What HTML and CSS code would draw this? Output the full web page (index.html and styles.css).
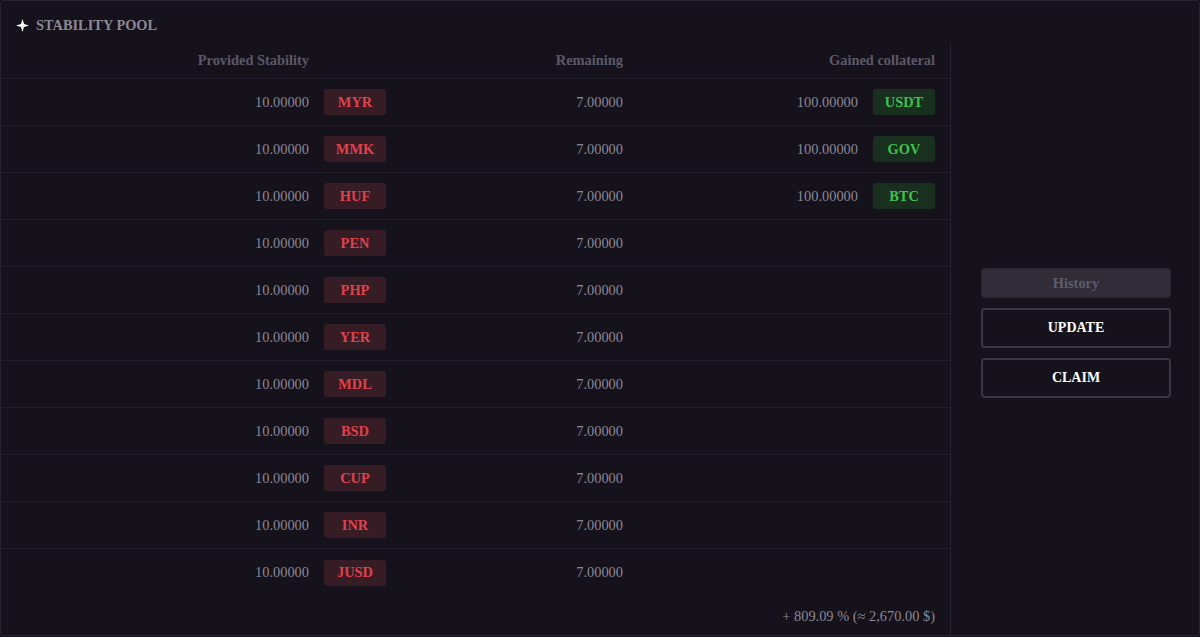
FILE: index.html
```html
<!DOCTYPE html>
<html>
<head>
<meta charset="utf-8">
<link rel="stylesheet" href="styles.css">
</head>
<body>
<div class="card">
  <div class="title">
    <svg class="star" width="13" height="13" viewBox="0 0 13 13"><path d="M6.5 0 L8 5 L13 6.5 L8 8 L6.5 13 L5 8 L0 6.5 L5 5 Z" fill="#ffffff"/></svg>
    <span>STABILITY POOL</span>
  </div>
  <div class="body">
    <div class="table">
      <div class="row head">
        <div class="num">Provided Stability</div>
        <div></div>
        <div class="num">Remaining</div>
        <div class="num">Gained collateral</div>
      </div>
      <div class="row"><div class="num">10.00000</div><div><span class="badge red">MYR</span></div><div class="num">7.00000</div><div class="gain"><span>100.00000</span><span class="badge green">USDT</span></div></div>
      <div class="row"><div class="num">10.00000</div><div><span class="badge red">MMK</span></div><div class="num">7.00000</div><div class="gain"><span>100.00000</span><span class="badge green">GOV</span></div></div>
      <div class="row"><div class="num">10.00000</div><div><span class="badge red">HUF</span></div><div class="num">7.00000</div><div class="gain"><span>100.00000</span><span class="badge green">BTC</span></div></div>
      <div class="row"><div class="num">10.00000</div><div><span class="badge red">PEN</span></div><div class="num">7.00000</div><div></div></div>
      <div class="row"><div class="num">10.00000</div><div><span class="badge red">PHP</span></div><div class="num">7.00000</div><div></div></div>
      <div class="row"><div class="num">10.00000</div><div><span class="badge red">YER</span></div><div class="num">7.00000</div><div></div></div>
      <div class="row"><div class="num">10.00000</div><div><span class="badge red">MDL</span></div><div class="num">7.00000</div><div></div></div>
      <div class="row"><div class="num">10.00000</div><div><span class="badge red">BSD</span></div><div class="num">7.00000</div><div></div></div>
      <div class="row"><div class="num">10.00000</div><div><span class="badge red">CUP</span></div><div class="num">7.00000</div><div></div></div>
      <div class="row"><div class="num">10.00000</div><div><span class="badge red">INR</span></div><div class="num">7.00000</div><div></div></div>
      <div class="row last"><div class="num">10.00000</div><div><span class="badge red">JUSD</span></div><div class="num">7.00000</div><div></div></div>
      <div class="total">+ 809.09 % (≈ 2,670.00 $)</div>
    </div>
    <div class="side">
      <button class="btn history">History</button>
      <button class="btn outline">UPDATE</button>
      <button class="btn outline">CLAIM</button>
    </div>
  </div>
</div>
</body>
</html>
```

FILE: styles.css
```css
html, body {
  margin: 0;
  padding: 0;
  background: #15121c;
}
body {
  font-family: "Liberation Serif", "Times New Roman", serif;
  width: 1200px;
  height: 637px;
}
.card {
  box-sizing: border-box;
  width: 1200px;
  height: 636px;
  border: 1px solid #27232f;
  border-radius: 4px;
  background: #15121c;
  display: flex;
  flex-direction: column;
}
.title {
  height: 41px;
  display: flex;
  align-items: center;
  padding-left: 15px;
  gap: 7px;
  padding-top: 7px;
  box-sizing: border-box;
  color: #8c8896;
  font-weight: bold;
  font-size: 14.4px;
}
.star {
  display: block;
}
.body {
  flex: 1;
  display: flex;
}
.table {
  width: 949px;
  border-right: 1px solid #27232f;
  display: flex;
  flex-direction: column;
}
.row {
  display: grid;
  grid-template-columns: 1fr 62px 222px 297px;
  column-gap: 15px;
  padding: 0 15px;
  height: 47px;
  align-items: center;
  border-bottom: 1px solid #221f2a;
  box-sizing: border-box;
  color: #8c8896;
  font-size: 14.4px;
}
.row.head {
  height: 37px;
  color: #5c5867;
  font-weight: bold;
}
.row.last {
  border-bottom: none;
}
.num {
  text-align: right;
}
.gain {
  display: flex;
  justify-content: flex-end;
  align-items: center;
  gap: 15px;
}
.badge {
  display: inline-flex;
  align-items: center;
  justify-content: center;
  width: 62px;
  height: 26px;
  border-radius: 3px;
  font-weight: bold;
  font-size: 14.4px;
}
.red {
  background: #361c25;
  color: #e0414b;
}
.green {
  background: #19301f;
  color: #3ec24e;
}
.total {
  text-align: right;
  padding: 12px 15px 0 0;
  color: #8c8896;
  font-size: 14.4px;
}
.side {
  flex: 1;
  display: flex;
  flex-direction: column;
  align-items: center;
  padding-top: 226px;
  padding-left: 2px;
  gap: 10px;
}
.btn {
  width: 190px;
  font-family: "Liberation Serif", "Times New Roman", serif;
  font-weight: bold;
  font-size: 14px;
  border-radius: 4px;
  box-sizing: border-box;
  cursor: pointer;
}
.history {
  height: 30px;
  background: #302d38;
  border: 1px solid #2a2731;
  color: #5f5b69;
  font-size: 14.4px;
}
.outline {
  height: 40px;
  background: #15121c;
  border: 2px solid #3a3742;
  color: #ffffff;
}
```
